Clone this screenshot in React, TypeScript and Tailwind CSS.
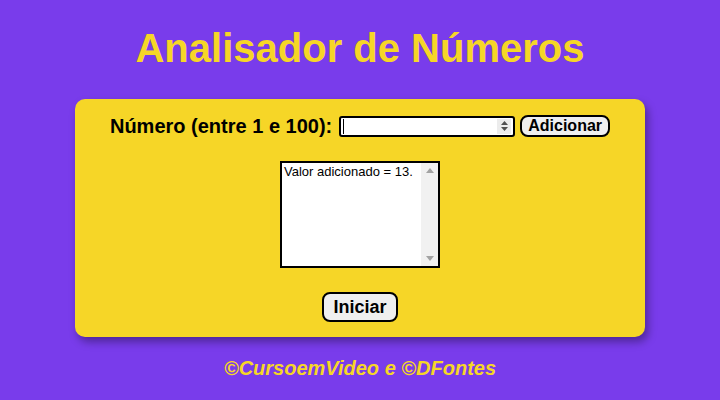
import React from 'react';

const App: React.FC = () => {
  return (
    <div className="w-[720px] h-[400px] bg-[#793ceb] flex flex-col items-center" style={{ fontFamily: '"Liberation Sans", Arial, sans-serif' }}>
      <h1 className="mt-[24px] text-[40px] leading-[48px] font-bold text-[#f6d627]">Analisador de Números</h1>
      <div className="mt-[27px] w-[570px] h-[238px] bg-[#f6d627] rounded-[10px] shadow-[3px_5px_8px_rgba(0,0,0,0.35)] flex flex-col items-center">
        <div className="mt-[16px] flex items-center h-[22px]">
          <span className="text-[20px] font-bold text-black">Número (entre 1 e 100):</span>
          <div className="ml-[7px] w-[176px] h-[21px] bg-white border-2 border-black rounded-[3px] flex items-center relative">
            <div className="ml-[2px] w-px h-[15px] bg-black" />
            <div className="absolute right-[2px] top-[1px] w-[14px] h-[15px] bg-[#ececec] flex flex-col items-center justify-center gap-[2px]">
              <svg width="7" height="4" viewBox="0 0 7 4"><path d="M0 4 L3.5 0 L7 4 Z" fill="#505050" /></svg>
              <svg width="7" height="4" viewBox="0 0 7 4"><path d="M0 0 L3.5 4 L7 0 Z" fill="#505050" /></svg>
            </div>
          </div>
          <button className="ml-[5px] h-[22px] px-[6px] bg-[#efefef] border-2 border-black rounded-[8px] text-[16px] font-bold leading-none text-black">Adicionar</button>
        </div>
        <div className="mt-[24px] w-[160px] h-[107px] bg-white border-2 border-black flex">
          <div className="flex-1 text-[13px] leading-[15px] text-black pl-[2px] pt-[1px] whitespace-nowrap">Valor adicionado = 13.</div>
          <div className="w-[17px] h-full bg-[#f1f1f1] flex flex-col items-center justify-between py-[5px]">
            <svg width="8" height="5" viewBox="0 0 8 5"><path d="M0 5 L4 0 L8 5 Z" fill="#a3a3a3" /></svg>
            <svg width="8" height="5" viewBox="0 0 8 5"><path d="M0 0 L4 5 L8 0 Z" fill="#a3a3a3" /></svg>
          </div>
        </div>
        <button className="mt-[24px] h-[30px] px-[9px] bg-[#efefef] border-2 border-black rounded-[8px] text-[18px] font-bold leading-none text-black">Iniciar</button>
      </div>
      <p className="mt-[19px] text-[20px] leading-[24px] font-bold italic text-[#f6d627]">©CursoemVideo e ©DFontes</p>
    </div>
  );
};

export default App;
